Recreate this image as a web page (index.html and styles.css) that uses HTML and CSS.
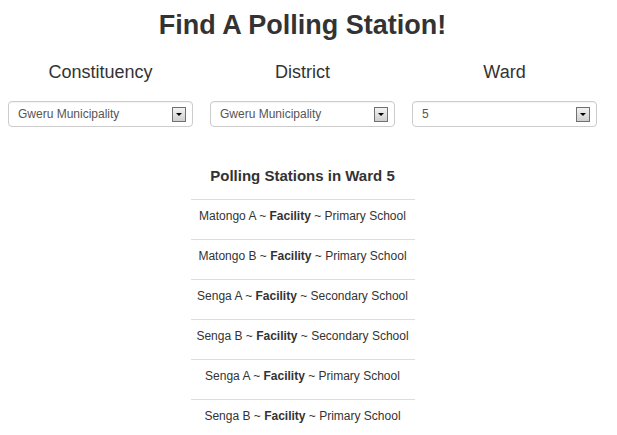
FILE: index.html
```html
<!DOCTYPE html>
<html lang="en">
<head>
    <meta charset="UTF-8">
    <meta name="viewport" content="width=device-width, initial-scale=1.0">
    <title>Find A Polling Station</title>
    <link rel="stylesheet" href="styles.css">
</head>
<body>
    <div id="app">
        <h1>Find A Polling Station!</h1>

        <!-- Filter columns -->
        <div class="filters">
            <div class="filter">
                <label>Constituency</label>
                <div class="select-box">
                    <span class="select-value">Gweru Municipality</span>
                    <span class="select-arrow"></span>
                </div>
            </div>
            <div class="filter">
                <label>District</label>
                <div class="select-box">
                    <span class="select-value">Gweru Municipality</span>
                    <span class="select-arrow"></span>
                </div>
            </div>
            <div class="filter">
                <label>Ward</label>
                <div class="select-box">
                    <span class="select-value">5</span>
                    <span class="select-arrow"></span>
                </div>
            </div>
        </div>

        <h2>Polling Stations in Ward 5</h2>
        <table class="stations">
            <tr><td>Matongo A ~ <strong>Facility</strong> ~ Primary School</td></tr>
            <tr><td>Matongo B ~ <strong>Facility</strong> ~ Primary School</td></tr>
            <tr><td>Senga A ~ <strong>Facility</strong> ~ Secondary School</td></tr>
            <tr><td>Senga B ~ <strong>Facility</strong> ~ Secondary School</td></tr>
            <tr><td>Senga A ~ <strong>Facility</strong> ~ Primary School</td></tr>
            <tr><td>Senga B ~ <strong>Facility</strong> ~ Primary School</td></tr>
        </table>
    </div>
</body>
</html>
```

FILE: styles.css
```css
body {
    font-family: "Liberation Sans", Arial, sans-serif;
    background-color: #fff;
    color: #333;
    margin: 0;
}

#app {
    width: 589px;
    margin-left: 8px;
}

h1 {
    font-size: 27px;
    line-height: 31px;
    font-weight: bold;
    text-align: center;
    margin: 10px 0 0;
}

.filters {
    display: flex;
    gap: 17px;
    margin-top: 21px;
}

.filter {
    flex: 1;
    display: flex;
    flex-direction: column;
    align-items: stretch;
}

.filter label {
    font-size: 18px;
    line-height: 20px;
    text-align: center;
}

.select-box {
    display: flex;
    align-items: center;
    justify-content: space-between;
    height: 24px;
    margin-top: 19px;
    padding: 0 6px 0 9px;
    border: 1px solid #ccc;
    border-radius: 4px;
    box-shadow: inset 0 1px 1px rgba(0, 0, 0, 0.05);
    font-size: 12px;
    color: #555;
}

.select-arrow {
    position: relative;
    width: 12px;
    height: 13px;
    border: 1px solid #707070;
    background: linear-gradient(#f2f2f2, #cfcfcf);
}

.select-arrow::after {
    content: "";
    position: absolute;
    left: 3px;
    top: 5px;
    border-left: 3px solid transparent;
    border-right: 3px solid transparent;
    border-top: 3px solid #000;
}

h2 {
    font-size: 15px;
    line-height: 20px;
    font-weight: bold;
    text-align: center;
    margin: 39px 0 0;
}

.stations {
    width: 224px;
    margin: 13px auto 0;
    border-collapse: collapse;
}

.stations td {
    border-top: 1px solid #ddd;
    padding: 6px 0 13px;
    font-size: 12px;
    line-height: 20px;
    text-align: center;
    white-space: nowrap;
}
```
